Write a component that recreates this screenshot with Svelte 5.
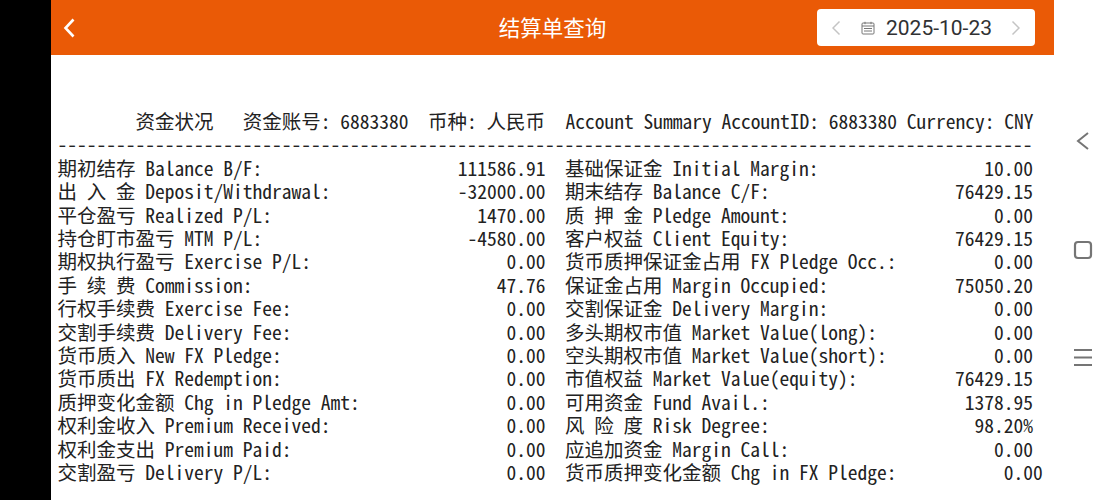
<script>
  const titleLeft = '        资金状况   资金账号: 6883380  币种: 人民币';
  const titleRight = 'Account Summary AccountID: 6883380 Currency: CNY';
  const left = [
    ['期初结存 Balance B/F:', '111586.91'],
    ['出 入 金 Deposit/Withdrawal:', '-32000.00'],
    ['平仓盈亏 Realized P/L:', '1470.00'],
    ['持仓盯市盈亏 MTM P/L:', '-4580.00'],
    ['期权执行盈亏 Exercise P/L:', '0.00'],
    ['手 续 费 Commission:', '47.76'],
    ['行权手续费 Exercise Fee:', '0.00'],
    ['交割手续费 Delivery Fee:', '0.00'],
    ['货币质入 New FX Pledge:', '0.00'],
    ['货币质出 FX Redemption:', '0.00'],
    ['质押变化金额 Chg in Pledge Amt:', '0.00'],
    ['权利金收入 Premium Received:', '0.00'],
    ['权利金支出 Premium Paid:', '0.00'],
    ['交割盈亏 Delivery P/L:', '0.00']
  ];
  const right = [
    ['基础保证金 Initial Margin:', '10.00'],
    ['期末结存 Balance C/F:', '76429.15'],
    ['质 押 金 Pledge Amount:', '0.00'],
    ['客户权益 Client Equity:', '76429.15'],
    ['货币质押保证金占用 FX Pledge Occ.:', '0.00'],
    ['保证金占用 Margin Occupied:', '75050.20'],
    ['交割保证金 Delivery Margin:', '0.00'],
    ['多头期权市值 Market Value(long):', '0.00'],
    ['空头期权市值 Market Value(short):', '0.00'],
    ['市值权益 Market Value(equity):', '76429.15'],
    ['可用资金 Fund Avail.:', '1378.95'],
    ['风 险 度 Risk Degree:', '98.20%'],
    ['应追加资金 Margin Call:', '0.00'],
    ['货币质押变化金额 Chg in FX Pledge:', '0.00', true]
  ];
</script>

<div class="screen">
  <div class="bezel"></div>
  <div class="page">
    <header class="topbar">
      <svg viewBox="0 0 14 22" width="14" height="22">
        <path d="M11.500 2.500 3.500 11l8 8.500" fill="none" stroke="#fff" stroke-width="2.600" />
      </svg>
      <h1>结算单查询</h1>
      <div class="picker">
        <svg viewBox="0 0 10 16" width="10" height="16">
          <path d="M7.500 1.500 1 8l6.500 6.500" fill="none" stroke="#c4c4c4" stroke-width="1.500" />
        </svg>
        <svg class="cal" viewBox="0 0 14 14" width="14" height="14">
          <rect x="1" y="2" width="12" height="11" rx="1" fill="none" stroke="#777" />
          <path d="M1 5h12M4 .8v2.400M10 .8v2.400M3 7.500h8M3 10h8" fill="none" stroke="#777" />
        </svg>
        <span class="date">2025-10-23</span>
        <svg viewBox="0 0 10 16" width="10" height="16">
          <path d="M2.500 1.500 9 8l-6.500 6.500" fill="none" stroke="#c4c4c4" stroke-width="1.500" />
        </svg>
      </div>
    </header>

    <main class="report">
      <div class="title"><span>{titleLeft}</span><span>{titleRight}</span></div>
      <div>{'-'.repeat(100)}</div>
      <div class="columns">
        <div>
          {#each left as [label, value]}
            <div class="row"><span>{label}</span><span>{value}</span></div>
          {/each}
        </div>
        <div>
          {#each right as [label, value, wide]}
            <div class="row" class:wide><span>{label}</span><span>{value}</span></div>
          {/each}
        </div>
      </div>
    </main>
  </div>

  <nav class="sysnav">
    <svg viewBox="0 0 14 20" width="14" height="20">
      <path d="M12 2 2 10l10 8" fill="none" stroke="#757575" stroke-width="2" />
    </svg>
    <svg viewBox="0 0 20 20" width="20" height="20">
      <rect x="2" y="2" width="16" height="16" rx="3" fill="none" stroke="#757575" stroke-width="2.200" />
    </svg>
    <svg viewBox="0 0 18 19" width="18" height="19">
      <path d="M0 2h18M0 9.500h18M0 17h18" stroke="#757575" stroke-width="2" />
    </svg>
  </nav>
</div>

<style>
  :global(body) {
    margin: 0;
    background: #fff;
  }

  .screen {
    display: flex;
    width: 1111px;
    height: 500px;
    overflow: hidden;
  }

  .bezel {
    width: 51px;
    background: #000;
  }

  .page {
    width: 1003px;
  }

  .topbar {
    display: flex;
    align-items: center;
    justify-content: space-between;
    position: relative;
    height: 55px;
    padding: 0 19px 0 11px;
    box-sizing: border-box;
    background: #ea5a06;
  }

  h1 {
    position: absolute;
    left: 0;
    right: 0;
    margin: 0;
    padding-bottom: 3px;
    text-align: center;
    font: 400 21.500px "Noto Sans CJK SC", sans-serif;
    color: #fff;
    pointer-events: none;
  }

  .picker {
    display: flex;
    align-items: center;
    width: 218px;
    height: 37px;
    padding: 0 15px;
    box-sizing: border-box;
    border-radius: 4px;
    background: #fff;
  }

  .cal {
    margin-left: 19px;
  }

  .date {
    margin: 0 auto 0 11px;
    font: 400 21px Roboto, sans-serif;
    color: #303133;
  }

  .report {
    padding: 54px 0 0 6.500px;
    font: 400 19.500px/23.400px "Noto Sans Mono CJK SC", "DejaVu Sans Mono", "Noto Sans CJK SC", monospace;
    font-variant-numeric: slashed-zero;
    color: #222;
  }

  .report > div,
  .row span {
    white-space: pre;
  }

  .title {
    display: flex;
    justify-content: space-between;
    width: 976px;
  }

  .columns {
    display: grid;
    grid-template-columns: 488px 468px;
    column-gap: 19.500px;
  }

  .row {
    display: flex;
    justify-content: space-between;
  }

  .row.wide {
    margin-right: -9.750px;
  }

  .sysnav {
    display: flex;
    flex: 1;
    flex-direction: column;
    align-items: center;
    justify-content: space-between;
    padding: 131px 0 133px;
  }
</style>
